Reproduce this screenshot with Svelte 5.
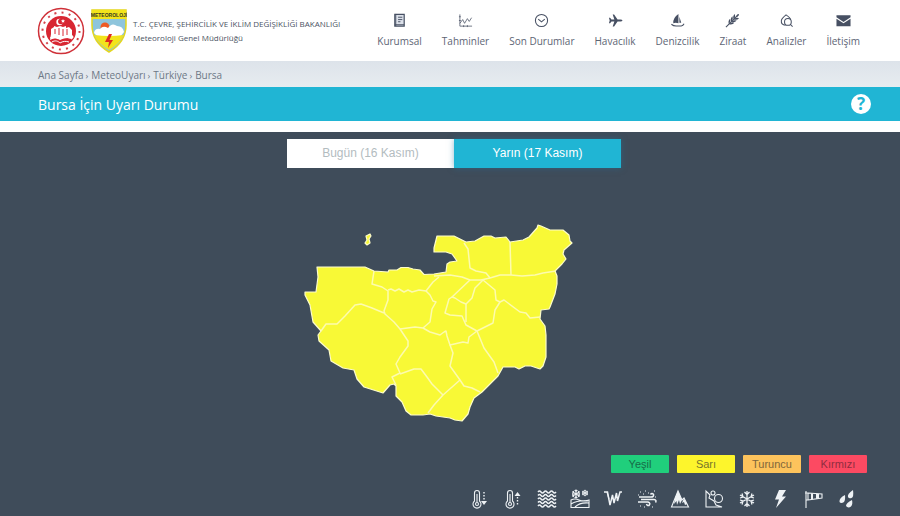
<script lang="ts">
  const menu = [
    { label: 'Kurumsal', icon: 'book' },
    { label: 'Tahminler', icon: 'chart' },
    { label: 'Son Durumlar', icon: 'clock' },
    { label: 'Havacılık', icon: 'plane' },
    { label: 'Denizcilik', icon: 'boat' },
    { label: 'Ziraat', icon: 'wheat' },
    { label: 'Analizler', icon: 'analysis' },
    { label: 'İletişim', icon: 'mail' }
  ]

  const days = ['Bugün (16 Kasım)', 'Yarın (17 Kasım)']
  let selected = $state(1)

  const levels = [
    { name: 'Yeşil', key: 'green' },
    { name: 'Sarı', key: 'yellow' },
    { name: 'Turuncu', key: 'orange' },
    { name: 'Kırmızı', key: 'red' }
  ]

  const events = ['cold', 'hot', 'fog', 'snowmelt', 'frost', 'dust', 'avalanche', 'rockfall', 'snow', 'storm', 'wind', 'rain']

  const province =
    'M317 267H365L374 271L388 272L389 270L397 270L401 267.500H408L413 269L420 270L424 274.500L434 274L446 272L447 264L450 262L457 261L452 254L446 252H434L434 248L437 236L454 236L466 242L475 241L484 236L491 236L495 238L506 237L510 242L523 240L529 237L537 228L538 225L541 226L550 230L563 230L569 235L570 241L572 243L564 250L563 254L566 259L562 264L555 271L557 276L557 284L555 294L550 307L549 309L541 310L540 319L545 326L546 335V357L543 366L540 369L531 366H525L519 369L515 367H503L498 376L482 392L474 398L470 407L468 414L462 421L455 420L450 418L436 416L430 414L423 415L411 415L406 411L402 402L396 396V386L394 384L390 385L383 393L364 387L357 379L354 370L343 368L331 361L329 350L319 341L318 335L321 331L313 322L310 305L305 295V292L316 292L318 277Z'

  const borders = [
    'M374 271L372 284L382 287L388 291L388 300L384 311L385 314L394 322L400 329L408 341L408 346L400 357L396 364L400 373L392 377L396 385',
    'M388 290L391 289L395 291L399 289L404 292L408 290L412 292L419 290L426 291L433 282L439 277',
    'M384 313L372 308L361 304L355 305L345 316L337 324L326 324L321 331',
    'M426 291L430 295L433 301L436 302L432 309L430 322L423 328',
    'M400 329L415 327L423 328L430 332L440 335L444 332',
    'M400 374L414 369H421L427 377L432 384L443 395',
    'M434 276L450 275L462 277L470 280L481 280L490 278L500 275L511 275L522 276L535 275L543 273L556 271',
    'M464 243L468 249L470 268L476 271L486 273L490 278',
    'M510 242L511 275',
    'M470 280L452 297L455 298L461 302L466 304L472 298L475 288L483 280',
    'M452 297L449 299L445 313L450 315L462 316L466 325L477 331',
    'M466 304V322',
    'M483 280L495 290L496 300L500 302L504 300L508 303L520 312L526 313L530 318L540 317',
    'M500 302L495 310L493 323L477 331L484 348L494 362L498 373',
    'M444 332L446 331L447 336L450 345L463 342L468 343L469 337L477 331',
    'M450 345L453 353L450 366L460 380L464 386L472 388L480 392',
    'M460 380L443 395L434 405L428 413'
  ]
</script>

{#snippet flake()}
  <path d="M0-8V8M-7-4L7 4M-7 4L7-4M-2.500-7L0-4.500L2.500-7M-2.500 7L0 4.500L2.500 7M-7-1L-4-2L-5-5.500M7 1L4 2L5 5.500M-7 1L-4 2L-5 5.500M7-1L4-2L5-5.500" />
{/snippet}

<div class="page">
  <header>
    <a class="brand" href="#home">
      <svg class="seal" viewBox="0 0 48 48" aria-hidden="true">
        <circle cx="24" cy="24" r="22.500" fill="#fff" stroke="#cf3038" stroke-width="1.500" />
        <circle cx="24" cy="24" r="18.500" fill="none" stroke="#d4424a" stroke-width="2" stroke-dasharray="2 5.265" />
        <circle cx="24" cy="24" r="15" fill="#d82632" />
        <circle cx="22.500" cy="15" r="3.200" fill="#fff" />
        <circle cx="23.800" cy="14.500" r="2.700" fill="#d82632" />
        <path d="M26 12l.6 1.200 1.400.2-1 1 .2 1.300-1.200-.6-1.200.6.2-1.300-1-1 1.400-.2z" fill="#fff" />
        <path d="M14 27v-5l3-2v-1l3 1 3-1 3 1 3-1v2l3-1 3 3v5c2 1 2 3 0 4-4-2-8-1-12 1-4-2-7-2-10 0z" fill="#fff" />
        <path d="M18 22v5M22 21v7M26 22v7M30 22v6" stroke="#d82632" stroke-width="1" />
        <path d="M13 31c4-2 7-1 10 1 4-2 8-2 12 0M15 35c3-2 6-1 8 1 3-2 6-2 9-1" fill="none" stroke="#fff" stroke-width="1" />
      </svg>
      <svg class="shield" viewBox="0 0 36 44" aria-hidden="true">
        <path d="M1 1H35V16Q35 33 18 43Q1 33 1 16Z" fill="#8ec5dc" stroke="#e5d61d" stroke-width="1.500" />
        <path d="M1 1H35V10H1Z" fill="#f2e41c" />
        <text x="18" y="8" text-anchor="middle">METEOROLOJİ</text>
        <circle cx="14" cy="18" r="4.500" fill="#ee5a24" />
        <path d="M3 24Q4 19 9 20Q12 16 17 19Q21 13 26 17Q32 17 33 23L29 28H7Z" fill="#fff" />
        <path d="M3.500 26Q18 28 32.500 26Q29 35 18 41Q7 35 3.500 26Z" fill="#f2e41c" />
        <path d="M18 25L14 33H18L17 39L22 31H18.500L21 25Z" fill="#df2c20" />
      </svg>
      <span class="agency">
        <span>T.C. ÇEVRE, ŞEHİRCİLİK VE İKLİM DEĞİŞİKLİĞİ BAKANLIĞI</span>
        <span>Meteoroloji Genel Müdürlüğü</span>
      </span>
    </a>
    <nav>
      {#each menu as item}
        <a href="#{item.icon}">
          <svg viewBox="0 0 16 16" aria-hidden="true">
            {#if item.icon === 'book'}
              <path d="M3 1.500H13V14H3Z" fill="#dce1ea" stroke="currentColor" stroke-width="1.300" />
              <path d="M4 1V14M3 12.500H13M6.500 4.500H11M6.500 7H11M6.500 9.300H9" fill="none" stroke="currentColor" />
            {:else if item.icon === 'chart'}
              <path class="line thin" d="M2 1.500V14H15M2 11L5 7L7 11L10 6L12 9L14.500 5M1 4H3M1 8H3M6 13V15M10 13V15" />
            {:else if item.icon === 'clock'}
              <circle class="line" cx="8" cy="8" r="6.500" />
              <path class="line" d="M4.500 6.500L8 9.500L11.500 6.500" />
            {:else if item.icon === 'plane'}
              <path d="M15.500 8Q15 6.800 13 6.900H10.200L6.500 1.500H5L6.800 6.900H3.700L2.200 5H1L1.800 8L1 11H2.200L3.700 9.100H6.800L5 14.500H6.500L10.200 9.100H13Q15 9.200 15.500 8Z" />
            {:else if item.icon === 'boat'}
              <path d="M9 1Q3 5 3.500 11Q6 10 9 11ZM10 4L12 10.500L10 10.500Z" />
              <path class="line" d="M1.500 12Q4 14.300 8 13.800H12Q14 13.500 15 11.500" />
            {:else if item.icon === 'wheat'}
              <path class="line" d="M1 15L14 2" />
              <path d="M9 6.500Q8 3 10.500 1Q11.500 4 9.800 6ZM6.500 9Q5.500 5.500 8 3.500Q9 6.500 7.300 8.500ZM4 11.500Q3 8 5.500 6Q6.500 9 4.800 11ZM9.500 7Q13 8 15 5.500Q12 4.500 10 6.200ZM7 9.500Q10.500 10.500 12.500 8Q9.500 7 7.500 8.700ZM4.500 12Q8 13 10 10.500Q7 9.500 5 11.200ZM12 4Q12 1.500 15 1Q14.500 4 12 4Z" />
            {:else if item.icon === 'analysis'}
              <path class="line" d="M7 13Q2 12.500 2.500 8Q3 5.500 7.500 2Q12 5 12.500 7" />
              <circle class="line" cx="9.500" cy="9.500" r="3.600" />
              <path class="line" d="M12 12L14.500 14.500" />
            {:else}
              <path d="M.5 2.500H15.500V4.500L8 9.500L.5 4.500ZM.5 6L8 11L15.500 6V14H.5Z" />
            {/if}
          </svg>
          <span>{item.label}</span>
        </a>
      {/each}
    </nav>
  </header>

  <div class="crumbs">
    <a href="#home">Ana Sayfa</a><i>›</i><a href="#meteouyari">MeteoUyarı</a><i>›</i><a href="#turkiye">Türkiye</a><i>›</i><a href="#bursa">Bursa</a>
  </div>

  <div class="title">
    <h1>Bursa İçin Uyarı Durumu</h1>
    <button class="help" aria-label="Yardım">?</button>
  </div>

  <main>
    <div class="tabs">
      {#each days as day, i}
        <button class:active={selected === i} onclick={() => (selected = i)}>{day}</button>
      {/each}
    </div>

    <svg class="map" viewBox="304 218 300 208" role="img" aria-label="Bursa">
      <path class="area" d={province} />
      <path class="area" d="M366 236L370 234L371 236L369 239L370 243L367 245L365 243L367 240Z" />
      {#each borders as d}
        <path class="border" {d} />
      {/each}
    </svg>

    <ul class="legend">
      {#each levels as level}
        <li class={level.key}>{level.name}</li>
      {/each}
    </ul>

    <ul class="events">
      {#each events as event}
        <li>
          <svg viewBox="0 0 20 20" aria-hidden="true">
            {#if event === 'cold' || event === 'hot'}
              <path d="M4.500 12V4Q4.500 1.500 7 1.500T9.500 4V12A4 4 0 1 1 4.500 12ZM7 5V13" />
              <circle cx="7" cy="15" r="1.500" />
              {#if event === 'cold'}
                <path d="M14 3V12" stroke-dasharray="1.500 1.500" stroke-width="1.400" />
                <path class="solid" d="M11 12H17L14 16Z" />
              {:else}
                <path d="M14.500 8V17" stroke-dasharray="1.500 1.500" stroke-width="1.400" />
                <path class="solid" d="M11.500 7H17.500L14.500 3Z" />
              {/if}
            {:else if event === 'fog'}
              {#each [3, 6.500, 10, 13.500, 17] as y}
                <path d="M1 {y}q1.500-2 3 0t3 0 3 0 3 0 3 0 3 0" stroke-width="1.400" />
              {/each}
            {:else if event === 'snowmelt'}
              <g transform="translate(6 5) scale(.55)" stroke-width="2">{@render flake()}</g>
              <g transform="translate(15 4) scale(.4)" stroke-width="2.500">{@render flake()}</g>
              <path d="M1 11Q5 9 9 11T19 11V18.500H1ZM1 15Q8 11 18 12M5 18Q10 13 19 14" />
            {:else if event === 'frost'}
              <path d="M1 3H4.500L7 16L9.500 6L11 14L13.500 4L14.500 12L17 3H19" stroke-width="1.500" />
              <path d="M4 3L6 10" />
            {:else if event === 'dust'}
              <path d="M2 8H14Q17 8 16.500 5.500Q15 3.500 13.500 5.500M4 10.500H17Q20 11 18.500 13.500M1 13H11Q14 14 12 16.500Q10 17 9.500 15" stroke-width="1.500" />
              <path d="M3 3H4M8 2H9M11 4H12M17 2H18M3 17H4M7 18H8M15 18H16M1 6H2M18 8H19M6 5H7" stroke-width="1.200" />
            {:else if event === 'avalanche'}
              <path d="M1.500 18L8 2L12 11L14 9L18.500 18Z" />
              <path class="solid" d="M8 2L5 9L4 15L6.500 12L7 16L9 11L10 15L12 11ZM14 9L12 14L14 13L15 16L17 15Z" />
            {:else if event === 'rockfall'}
              <path d="M2 18V2L6 6L5 9L10 12L12 16L18 18Z" />
              <circle cx="14.500" cy="9.500" r="4" />
              <circle cx="9" cy="4" r="2" />
            {:else if event === 'snow'}
              <g transform="translate(10 10)" stroke-width="1.300">{@render flake()}</g>
            {:else if event === 'storm'}
              <path class="solid" d="M9 1H16L12 7.500H16L6 19L9 10.500H5Z" />
            {:else if event === 'wind'}
              <path d="M2 2V19M1 4H4L18 5V9L4 11H2M4 4V11" />
              <path class="solid" d="M7 4.200L9 4.500V10.300L7 10.500ZM12 4.500L15 5V9.300L12 10Z" />
            {:else}
              <path class="solid" d="M16 1Q10 5 11 8Q12 10 14.500 9Q17 8 16 1ZM8 6Q2 9 2.500 13Q4 15 7 13Q8.500 11 8 6ZM15 11Q9 14 9 17Q11 19.500 14 17.500Q16 15 15 11Z" />
            {/if}
          </svg>
        </li>
      {/each}
    </ul>
  </main>
</div>

<style>
  :global(body) {
    margin: 0;
    background: #3f4c5a;
  }
  .page {
    display: flex;
    flex-direction: column;
    min-height: 100vh;
    font-family: 'Open Sans', 'Noto Sans', sans-serif;
    color: #5d6575;
  }
  a {
    color: inherit;
    text-decoration: none;
  }
  button {
    border: 0;
    padding: 0;
    cursor: pointer;
  }
  ul {
    list-style: none;
    margin: 0;
    padding: 0;
  }
  header {
    display: flex;
    align-items: center;
    justify-content: space-between;
    height: 61px;
    padding: 0 40px 0 37px;
    background: #fff;
  }
  .brand {
    display: flex;
    align-items: center;
    gap: 6px;
  }
  .seal {
    width: 48px;
    height: 48px;
  }
  .shield {
    width: 36px;
    height: 44px;
  }
  .shield text {
    font: bold 5px 'Liberation Sans', sans-serif;
    fill: #3a3a20;
  }
  .agency {
    display: flex;
    flex-direction: column;
    font-size: 8px;
    line-height: 14px;
    white-space: nowrap;
    color: #4c5464;
  }
  nav {
    display: flex;
    gap: 20px;
  }
  nav a {
    display: flex;
    flex-direction: column;
    align-items: center;
    gap: 6px;
    font-size: 10px;
    line-height: 14px;
    white-space: nowrap;
  }
  nav svg {
    width: 15px;
    height: 15px;
    fill: currentColor;
    color: #475063;
  }
  nav .line {
    fill: none;
    stroke: currentColor;
    stroke-width: 1.100;
  }
  nav .thin {
    stroke-width: 0.800;
  }
  .crumbs {
    display: flex;
    align-items: center;
    height: 26px;
    padding: 2px 38px 0;
    box-sizing: border-box;
    background: linear-gradient(#dde3ea, #e7ecf0);
    font-size: 10px;
    color: #6d7886;
  }
  .crumbs i {
    padding: 0 3px 0 2px;
    font-style: normal;
    font-size: 9px;
  }
  .title {
    display: flex;
    align-items: center;
    justify-content: space-between;
    height: 34px;
    padding: 0 29px 0 38px;
    border-bottom: 11px solid #fff;
    background: #20b5d4;
    color: #fff;
  }
  h1 {
    margin: 0;
    font-size: 14px;
    font-weight: 400;
  }
  .help {
    width: 20px;
    height: 20px;
    border-radius: 50%;
    background: #fff;
    color: #20b5d4;
    font: bold 17px/20px 'Open Sans', sans-serif;
  }
  main {
    display: flex;
    flex: 1;
    flex-direction: column;
    align-items: center;
    padding: 7px 33px 7px 41px;
    background: #3f4c5a;
  }
  .tabs {
    display: flex;
  }
  .tabs button {
    width: 167px;
    height: 29px;
    padding-bottom: 2px;
    background: #fff;
    color: #b3bcbf;
    font: 12px 'Liberation Sans', Arial, sans-serif;
  }
  .tabs .active {
    background: #20b5d4;
    color: #fff;
    box-shadow: 0 0 6px rgba(32, 120, 160, 0.5);
  }
  .map {
    width: 300px;
    height: 208px;
    margin: 50px 0 29px;
  }
  .area {
    fill: #f8f936;
    stroke: #fdfccb;
    stroke-width: 1.200;
    stroke-linejoin: round;
  }
  .border {
    fill: none;
    stroke: #fdfbae;
    stroke-width: 1.500;
    stroke-linejoin: round;
  }
  .legend {
    display: flex;
    align-self: flex-end;
    gap: 8px;
  }
  .legend li {
    width: 58px;
    border-radius: 1px;
    font: 11px/18px 'Liberation Sans', Arial, sans-serif;
    text-align: center;
  }
  .green {
    background: #20cf7c;
    color: #176b48;
  }
  .yellow {
    background: #fdf52c;
    color: #77752b;
  }
  .orange {
    background: #fdc35c;
    color: #80663b;
  }
  .red {
    background: #fc4a62;
    color: #8f2d40;
  }
  .events {
    display: flex;
    align-self: flex-end;
    justify-content: space-between;
    width: 387px;
    margin: 16px 10px 0 0;
  }
  .events svg {
    display: block;
    width: 20px;
    height: 20px;
    fill: none;
    stroke: #eef2f5;
    stroke-width: 1.100;
  }
  .events .solid {
    fill: #eef2f5;
    stroke: none;
  }
</style>
